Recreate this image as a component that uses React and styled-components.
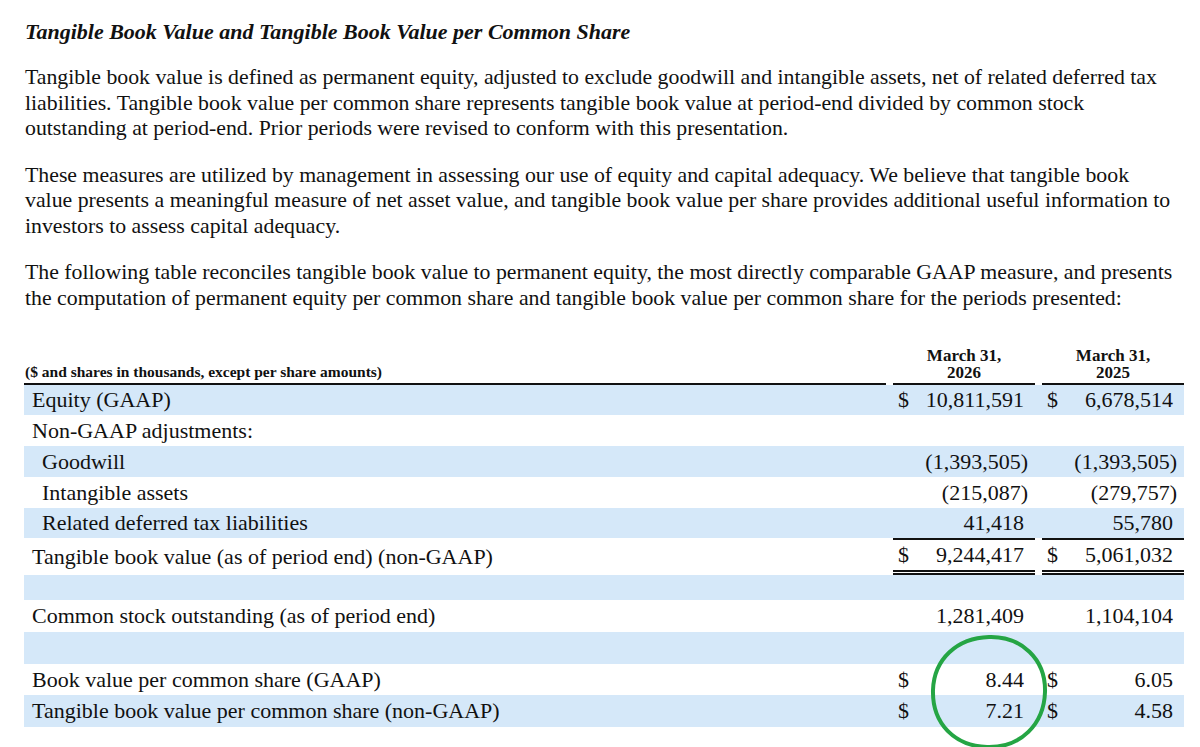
import React from 'react';
import styled, { createGlobalStyle } from 'styled-components';

const GlobalStyle = createGlobalStyle`
  body {
    margin: 0;
    background: #fff;
    color: #111;
    font-family: "Liberation Serif", "Times New Roman", serif;
  }
`;

const Page = styled.div`
  min-height: 747px;
  box-sizing: border-box;
  padding: 20px 10px 0 25px;
`;

const Title = styled.h3`
  margin: 0;
  font-size: 22px;
  line-height: 24px;
  font-weight: bold;
  font-style: italic;
`;

const Para = styled.p`
  margin: 21px 0 0;
  font-size: 21.8px;
  line-height: 25.5px;
  white-space: nowrap;
`;

const Table = styled.div`
  margin-top: 36px;
  margin-left: -1px;
  width: 1160px;
`;

const Row = styled.div`
  display: grid;
  grid-template-columns: 862px 142px 142px;
  column-gap: 7px;
  height: ${p => p.$height || 31}px;
  background: ${p => (p.$shaded ? '#d5e8f9' : 'transparent')};
  font-size: 22px;
`;

const HeadRow = styled.div`
  display: grid;
  grid-template-columns: 862px 142px 142px;
  column-gap: 7px;
  align-items: end;
  font-weight: bold;
`;

const HeadLabel = styled.div`
  font-size: 15.5px;
  line-height: 18px;
  padding: 0 0 2px 1px;
  border-bottom: 2px solid #111;
`;

const HeadCol = styled.div`
  font-size: 17px;
  line-height: 17px;
  text-align: center;
  padding-bottom: 2px;
  border-bottom: 2px solid #111;
`;

const Label = styled.div`
  display: flex;
  align-items: center;
  padding-left: ${p => (p.$indent ? 18 : 8)}px;
  white-space: nowrap;
`;

const Value = styled.div`
  position: relative;
  display: flex;
  align-items: center;
  justify-content: space-between;
  padding-left: 5px;
  padding-right: ${p => (p.$neg ? 7 : 11)}px;
  box-sizing: border-box;
  border-top: ${p => (p.$total ? '2px solid #111' : 'none')};
  border-bottom: ${p => (p.$total ? '5px double #111' : 'none')};
`;

const Dollar = styled.span``;

const Amount = styled.span`
  margin-left: auto;
`;

const Circle = styled.svg`
  position: absolute;
  left: 36px;
  top: -30px;
  pointer-events: none;
  overflow: visible;
`;

const rows = [
  { label: 'Equity (GAAP)', shaded: true, a: '10,811,591', b: '6,678,514', dollar: true, height: 30 },
  { label: 'Non-GAAP adjustments:' },
  { label: 'Goodwill', indent: true, shaded: true, a: '(1,393,505)', b: '(1,393,505)' },
  { label: 'Intangible assets', indent: true, a: '(215,087)', b: '(279,757)' },
  { label: 'Related deferred tax liabilities', indent: true, shaded: true, a: '41,418', b: '55,780', height: 30 },
  { label: 'Tangible book value (as of period end) (non-GAAP)', total: true, a: '9,244,417', b: '5,061,032', dollar: true, height: 37 },
  { shaded: true, height: 25 },
  { label: 'Common stock outstanding (as of period end)', a: '1,281,409', b: '1,104,104', height: 32 },
  { shaded: true, height: 32 },
  { label: 'Book value per common share (GAAP)', a: '8.44', b: '6.05', dollar: true, circle: true },
  { label: 'Tangible book value per common share (non-GAAP)', shaded: true, a: '7.21', b: '4.58', dollar: true, height: 32 },
];

const Cell = ({ value, dollar, total, circle }) => {
  const neg = value && value.startsWith('(');
  return (
    <Value $neg={neg} $total={total}>
      {dollar && <Dollar>$</Dollar>}
      <Amount>{value}</Amount>
      {circle && (
        <Circle width="120" height="116" viewBox="0 0 120 116">
          <path
            d="M60 3 C92 2 117 25 116 58 C115 90 92 114 58 113 C26 112 3 90 4 56 C5 25 28 4 60 3 Z"
            fill="none"
            stroke="#25a544"
            strokeWidth="4"
          />
        </Circle>
      )}
    </Value>
  );
};

const App = () => {
  return (
    <Page>
      <GlobalStyle />
      <Title>Tangible Book Value and Tangible Book Value per Common Share</Title>
      <Para>
        Tangible book value is defined as permanent equity, adjusted to exclude goodwill and intangible assets, net of related deferred tax
        <br />
        liabilities. Tangible book value per common share represents tangible book value at period-end divided by common stock
        <br />
        outstanding at period-end. Prior periods were revised to conform with this presentation.
      </Para>
      <Para>
        These measures are utilized by management in assessing our use of equity and capital adequacy. We believe that tangible book
        <br />
        value presents a meaningful measure of net asset value, and tangible book value per share provides additional useful information to
        <br />
        investors to assess capital adequacy.
      </Para>
      <Para>
        The following table reconciles tangible book value to permanent equity, the most directly comparable GAAP measure, and presents
        <br />
        the computation of permanent equity per common share and tangible book value per common share for the periods presented:
      </Para>

      <Table>
        <HeadRow>
          <HeadLabel>($ and shares in thousands, except per share amounts)</HeadLabel>
          <HeadCol>March 31,<br />2026</HeadCol>
          <HeadCol>March 31,<br />2025</HeadCol>
        </HeadRow>
        {rows.map((r, i) => (
          <Row key={i} $shaded={r.shaded} $height={r.height}>
            <Label $indent={r.indent}>{r.label}</Label>
            <Cell value={r.a} dollar={r.dollar} total={r.total} circle={r.circle} />
            <Cell value={r.b} dollar={r.dollar} total={r.total} />
          </Row>
        ))}
      </Table>
    </Page>
  );
};

export default App;
